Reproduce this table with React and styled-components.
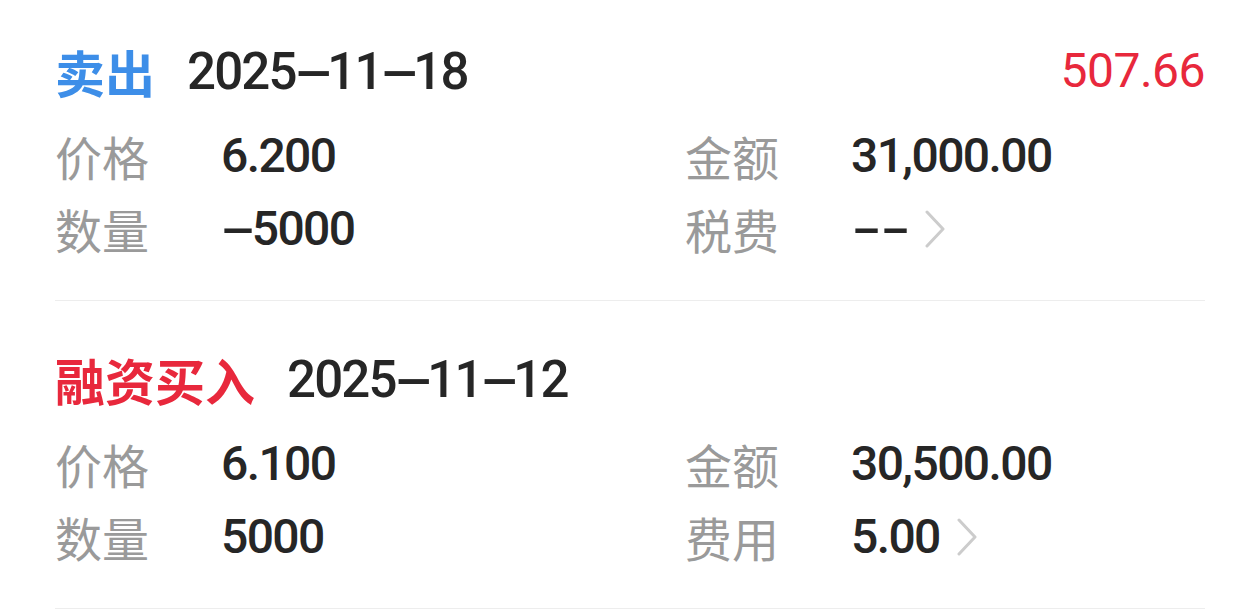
import React from "react";
import styled, { createGlobalStyle } from "styled-components";

const Global = createGlobalStyle`
  html, body { margin: 0; padding: 0; background: #ffffff; }
  body { font-family: Roboto, "Noto Sans CJK SC", sans-serif; }
`;

const Page = styled.div`
  width: 1260px;
  height: 616px;
  overflow: hidden;
  padding: 0 55px;
  box-sizing: border-box;
  background: #fff;
`;

const Card = styled.div`
  padding: 46px 0 35px;
  border-bottom: 1px solid #ededed;
  &:first-child { padding-top: 39px; }
`;

const Header = styled.div`
  display: flex;
  align-items: center;
  height: 64px;
  margin-bottom: 16px;
`;

const Type = styled.span`
  font-family: "Noto Sans CJK SC", sans-serif;
  font-weight: 700;
  font-size: 50px;
  color: ${(p) => p.$color};
  margin-right: 32px;
  line-height: 1;
`;

const DateText = styled.span`
  font-family: Roboto, sans-serif;
  font-weight: 500;
  font-size: 51px;
  letter-spacing: -1.8px;
  color: #262626;
  line-height: 1;
`;

const Amount = styled.span`
  margin-left: auto;
  font-family: Roboto, sans-serif;
  font-weight: 400;
  font-size: 48px;
  letter-spacing: -0.5px;
  color: #e8283c;
  line-height: 1;
`;

const Grid = styled.div`
  display: grid;
  grid-template-columns: 166px 464px 166px 1fr;
  grid-auto-rows: 73px;
  align-items: center;
`;

const Label = styled.span`
  font-family: "Noto Sans CJK SC", sans-serif;
  font-size: 47px;
  color: #9a9a9a;
  line-height: 1;
`;

const Value = styled.span`
  display: flex;
  align-items: center;
  font-family: Roboto, sans-serif;
  font-weight: 500;
  font-size: 48px;
  letter-spacing: -1.6px;
  color: #262626;
  line-height: 1;
`;

const Dash = styled.span`
  display: inline-block;
  transform: scaleX(${(p) => p.$scale || 2.2});
  margin: 0 ${(p) => p.$m || 8}px;
`;

const Chevron = styled.svg`
  width: 22px;
  height: 38px;
  margin-left: 16px;
  flex-shrink: 0;
`;

const Arrow = () => (
  <Chevron viewBox="0 0 22 38">
    <polyline
      points="3,2 19,19 3,36"
      fill="none"
      stroke="#cccccc"
      strokeWidth="3"
      strokeLinecap="round"
      strokeLinejoin="round"
    />
  </Chevron>
);

const DateWithDashes = ({ parts }) => (
  <DateText>
    {parts[0]}
    <Dash $scale={2.3} $m={8}>-</Dash>
    {parts[1]}
    <Dash $scale={2.3} $m={8}>-</Dash>
    {parts[2]}
  </DateText>
);

export default function App() {
  return (
    <>
      <Global />
      <Page>
        <Card>
          <Header>
            <Type $color="#3d8ee8">卖出</Type>
            <DateWithDashes parts={["2025", "11", "18"]} />
            <Amount>507.66</Amount>
          </Header>
          <Grid>
            <Label>价格</Label>
            <Value>6.200</Value>
            <Label>金额</Label>
            <Value>31,000.00</Value>
            <Label>数量</Label>
            <Value>
              <Dash $scale={2.2} $m={8}>-</Dash>5000
            </Value>
            <Label>税费</Label>
            <Value>
              <Dash $scale={1.8} $m={7}>-</Dash>
              <Dash $scale={1.8} $m={7}>-</Dash>
              <Arrow />
            </Value>
          </Grid>
        </Card>
        <Card>
          <Header>
            <Type $color="#e8283c">融资买入</Type>
            <DateWithDashes parts={["2025", "11", "12"]} />
          </Header>
          <Grid>
            <Label>价格</Label>
            <Value>6.100</Value>
            <Label>金额</Label>
            <Value>30,500.00</Value>
            <Label>数量</Label>
            <Value>5000</Value>
            <Label>费用</Label>
            <Value>
              5.00
              <Arrow />
            </Value>
          </Grid>
        </Card>
      </Page>
    </>
  );
}
